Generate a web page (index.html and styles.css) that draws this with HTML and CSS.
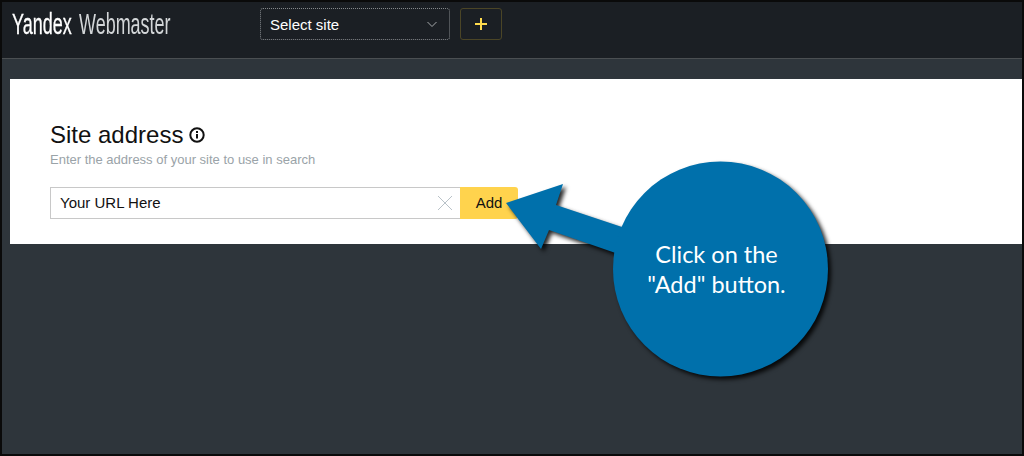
FILE: index.html
```html
<!DOCTYPE html>
<html lang="en">
<head>
<meta charset="utf-8">
<title>Yandex Webmaster</title>
<link rel="stylesheet" href="styles.css">
</head>
<body>
<div class="frame">
  <header class="topbar">
    <div class="logo"><span class="logo-word logo-strong">Yandex</span><span class="logo-word logo-light">Webmaster</span></div>
    <div class="site-select">
      <span>Select site</span>
      <svg class="chevron" width="12" height="7" viewBox="0 0 12 7"><path d="M1.5 1l4.5 4.5L10.500 1" fill="none" stroke="#a6a9ab" stroke-width="1"/></svg>
    </div>
    <div class="add-site">
      <svg width="12" height="12" viewBox="0 0 12 12"><path d="M6 0v12M0 6h12" stroke="#ffdb4d" stroke-width="2"/></svg>
    </div>
  </header>
  <main class="content">
    <section class="panel">
      <h1 class="title">Site address
        <svg class="info" width="16" height="16" viewBox="0 0 16 16"><circle cx="8" cy="8" r="6.700" fill="none" stroke="#111" stroke-width="2"/><path d="M8 7v4.500" stroke="#111" stroke-width="2"/><path d="M8 4v2" stroke="#111" stroke-width="2"/></svg>
      </h1>
      <p class="hint">Enter the address of your site to use in search</p>
      <div class="form">
        <div class="field">
          <span class="raised">Your URL Here</span>
          <svg width="16" height="16" viewBox="0 0 16 16"><path d="M1 1l14 14M15 1L1 15" stroke="#b9c2c8" stroke-width="1"/></svg>
        </div>
        <div class="add-button"><span class="raised">Add</span></div>
      </div>
    </section>
  </main>
</div>
<svg class="callout-shape" width="1024" height="456" viewBox="0 0 1024 456">
  <g class="callout-fill">
    <path d="M506 203L563 184L556 205L640 233L630 258L549 230L541 249Z"/>
    <circle cx="720.500" cy="269" r="107.500"/>
  </g>
</svg>
<div class="callout-text">Click on the<br>"Add" button.</div>
</body>
</html>
```
FILE: styles.css
```css
* { box-sizing: border-box; }
html, body { margin: 0; padding: 0; }
body {
  width: 1024px;
  height: 456px;
  overflow: hidden;
  background: #000;
  font-family: "Liberation Sans", Arial, sans-serif;
  position: relative;
}
.frame {
  width: 1024px;
  height: 456px;
  border: 2px solid #0a0a0a;
  display: flex;
  flex-direction: column;
  background: #2e353b;
}
.topbar {
  height: 57px;
  flex: none;
  background: #1b1f24;
  border-bottom: 1px solid #4b4f52;
  display: flex;
  align-items: flex-start;
  padding: 6px 0 0 10px;
}
.logo {
  width: 248px;
  height: 32px;
  flex: none;
  display: flex;
  gap: 6px;
  font-size: 29px;
  line-height: 32px;
  white-space: nowrap;
}
.logo-word {
  display: block;
  transform: scaleX(0.62);
  transform-origin: left center;
}
.logo-strong { width: 61px; color: #fff; -webkit-text-stroke: 0.3px #fff; }
.logo-light { color: #d3d6d8; }
.site-select {
  width: 190px;
  height: 32px;
  border: 1px dotted #85898c;
  border-radius: 3px;
  color: #fff;
  font-size: 15px;
  display: flex;
  align-items: center;
  justify-content: space-between;
  padding: 0 11px 0 9px;
}
.add-site {
  width: 42px;
  height: 32px;
  margin-left: 10px;
  border: 1px solid #4b4526;
  border-radius: 3px;
  display: flex;
  align-items: center;
  justify-content: center;
}
.content { flex: 1; padding-top: 20px; padding-left: 8px; }
.panel {
  height: 165px;
  background: #fff;
  padding: 42px 0 0 40px;
}
.title {
  margin: 0;
  font-size: 24px;
  font-weight: 400;
  line-height: 28px;
  color: #111;
  display: flex;
  align-items: center;
  gap: 6px;
}
.hint {
  margin: 3px 0 0;
  font-size: 13px;
  line-height: 16px;
  color: #9aa3a8;
}
.form { display: flex; margin-top: 19px; }
.field {
  width: 410px;
  height: 32px;
  border: 1px solid #c8c8c8;
  border-right: 0;
  display: flex;
  align-items: center;
  justify-content: space-between;
  padding: 0 7px 0 9px;
  font-size: 15px;
  color: #111;
}
.raised { margin-bottom: 2px; }
.add-button {
  width: 58px;
  height: 32px;
  background: #ffd34d;
  border-radius: 0 3px 3px 0;
  display: flex;
  align-items: center;
  justify-content: center;
  font-size: 15px;
  color: #111;
}
.callout-shape { position: absolute; left: 0; top: 0; }
.callout-fill { fill: #0070ab; filter: drop-shadow(3px 3px 2px rgba(0, 0, 0, 0.85)); }
.callout-text {
  position: absolute;
  left: 609px;
  top: 239px;
  width: 215px;
  text-align: center;
  color: #fff;
  font-family: "Lato", sans-serif;
  font-size: 23.500px;
  line-height: 30px;
}
```
